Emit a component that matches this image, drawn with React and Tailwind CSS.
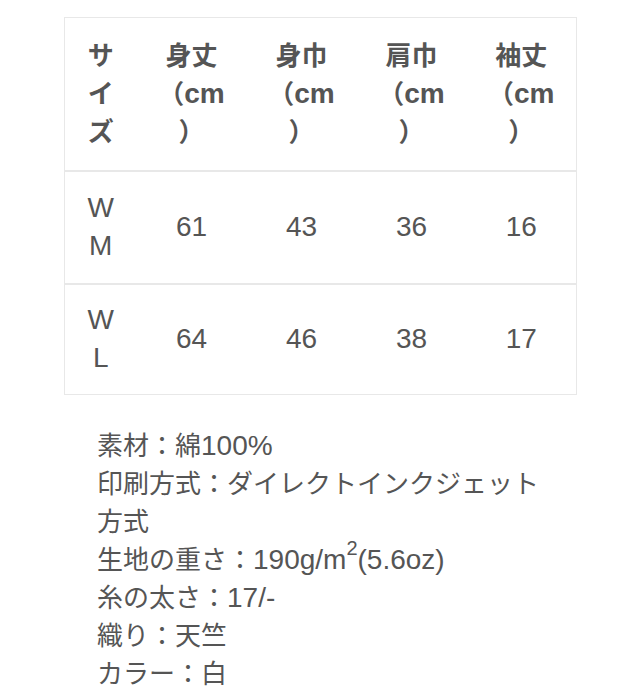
import React from "react";

const rows = [
  { size: ["W", "M"], values: ["61", "43", "36", "16"] },
  { size: ["W", "L"], values: ["64", "46", "38", "17"] },
];

const heads = ["身丈", "身巾", "肩巾", "袖丈"];

// Latin runs are a bit larger than the kana, as in the reference
function L({ children }) {
  return <span className="text-[28px]">{children}</span>;
}

export default function App() {
  return (
    <div
      className="bg-white w-[640px] h-[686px] overflow-hidden pt-[17px] text-[#555] text-[26px] leading-[38px]"
      style={{ fontFamily: '"Liberation Sans", "Noto Sans CJK JP", sans-serif' }}
    >
      <table className="ml-[64px] w-[512px] table-fixed border-collapse border border-[#e8e8e8] text-center">
        <colgroup>
          <col className="w-[72px]" />
          <col className="w-[110px]" />
          <col className="w-[110px]" />
          <col className="w-[110px]" />
          <col className="w-[110px]" />
        </colgroup>
        <thead>
          <tr className="h-[153px] border-b-2 border-[#e8e8e8]">
            <th className="font-bold align-middle">
              サ<br />イ<br />ズ
            </th>
            {heads.map((h) => (
              <th key={h} className="font-bold align-middle">
                {h}
                <br />
                （<L>cm</L>
                <br />
                ）
              </th>
            ))}
          </tr>
        </thead>
        <tbody>
          {rows.map((r, i) => (
            <tr key={i} className={i === 0 ? "h-[113px] border-b-2 border-[#e8e8e8]" : "h-[111px]"}>
              <td className="align-middle">
                <L>{r.size[0]}</L>
                <br />
                <L>{r.size[1]}</L>
              </td>
              {r.values.map((v, j) => (
                <td key={j} className="align-middle">
                  <L>{v}</L>
                </td>
              ))}
            </tr>
          ))}
        </tbody>
      </table>

      <div className="ml-[97px] w-[450px] mt-[32px]">
        <p>
          素材：綿<L>100%</L>
        </p>
        <p>印刷方式：ダイレクトインクジェット方式</p>
        <p>
          生地の重さ：<L>190g/m</L>
          <sup className="text-[20px] -top-[0.7em]">2</sup>
          <L>(5.6oz)</L>
        </p>
        <p>
          糸の太さ：<L>17/-</L>
        </p>
        <p>織り：天竺</p>
        <p>カラー：白</p>
      </div>
    </div>
  );
}
